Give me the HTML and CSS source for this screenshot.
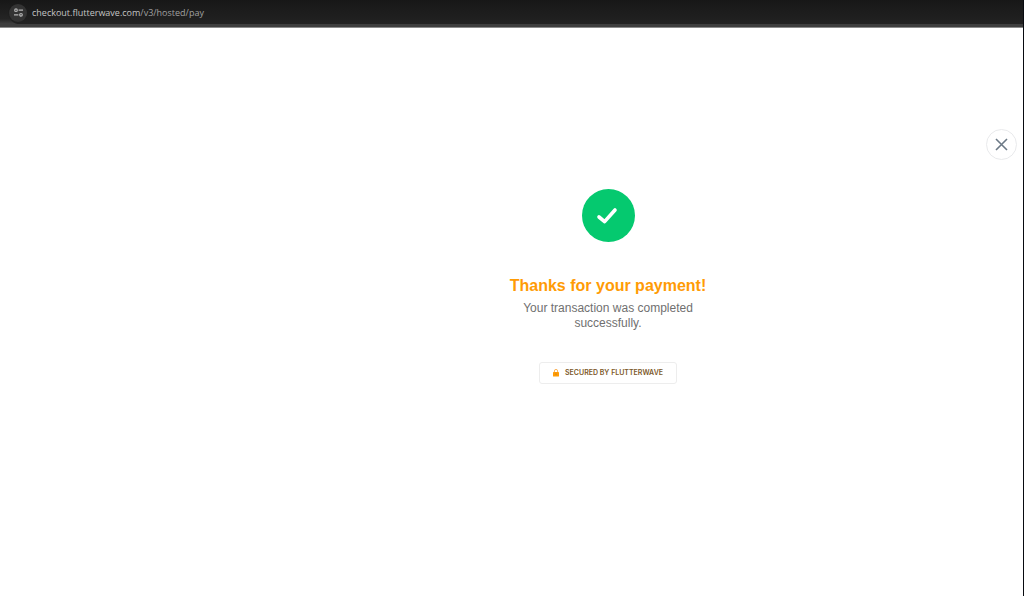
FILE: index.html
```html
<!DOCTYPE html>
<html lang="en">
<head>
<meta charset="utf-8">
<meta name="viewport" content="width=device-width, initial-scale=1">
<title>Payment complete</title>
<link rel="stylesheet" href="styles.css">
</head>
<body>
<header class="browser-bar">
  <div class="address">
    <button class="site-info" type="button" aria-label="View site information">
      <svg width="9" height="9" viewBox="0 0 9 9" fill="none" stroke="currentColor" stroke-width="1.2" aria-hidden="true">
        <circle cx="2" cy="2.2" r="1.3"/><path d="M4.6 2.2H9M0 6.8h4.4"/><circle cx="7" cy="6.8" r="1.3"/>
      </svg>
    </button>
    <span class="url"><span class="url-host">checkout.flutterwave.com</span>/v3/hosted/pay</span>
  </div>
</header>
<main class="page">
  <div class="toolbar">
    <button class="close" type="button" aria-label="Close">
      <svg width="13" height="13" viewBox="0 0 13 13" fill="none" stroke="currentColor" stroke-width="1.6" aria-hidden="true"><path d="M1 1l11 11M12 1L1 12"/></svg>
    </button>
  </div>
  <section class="result">
    <svg class="success" width="53" height="53" viewBox="0 0 53 53" aria-hidden="true">
      <circle cx="26.5" cy="26.5" r="26.5" fill="#05c96f"/>
      <path d="M17 28l5.6 4.6L33 21" fill="none" stroke="#fff" stroke-width="3.6" stroke-linecap="round" stroke-linejoin="round"/>
    </svg>
    <h1 class="title">Thanks for your payment!</h1>
    <p class="message">Your transaction was completed successfully.</p>
    <div class="secured">
      <svg width="6" height="8" viewBox="0 0 6 8" aria-hidden="true">
        <path d="M1.4 3.5V2a1.6 1.6 0 0 1 3.2 0v1.5" fill="none" stroke="#f8a94a" stroke-width=".9"/>
        <rect y="3" width="6" height="4.5" rx=".6" fill="#ff9b05"/><path d="M3 4.5v1.4" stroke="#b87824" stroke-width=".8"/>
      </svg>
      <span>SECURED BY FLUTTERWAVE</span>
    </div>
  </section>
</main>
</body>
</html>
```
FILE: styles.css
```css
* {
  box-sizing: border-box;
}

body {
  display: flex;
  flex-direction: column;
  min-height: 100vh;
  margin: 0;
  border-right: 1px solid #080a0f;
  background: #fff;
  font-family: "Liberation Sans", Arial, sans-serif;
}

button {
  display: grid;
  place-items: center;
  padding: 0;
  border-radius: 50%;
  cursor: pointer;
}

.browser-bar {
  height: 28px;
  padding: 1px 0 3px 8px;
  border-bottom: 1px solid #8a8a8a;
  background: linear-gradient(#171717, #242424 70%, #3e3e3e 88%);
}

.address {
  display: flex;
  align-items: center;
  gap: 5px;
  height: 23px;
  padding-left: 1px;
  border-radius: 12px 0 0 12px;
  background: linear-gradient(#181818, #222);
}

.site-info {
  width: 18px;
  height: 18px;
  border: 0;
  background: #333;
  color: #b5b5b5;
}

.url {
  color: #a0a0a0;
  font: 9px/16px "Open Sans", "Noto Sans", sans-serif;
}

.url-host {
  color: #c4c4c4;
}

.page {
  flex: 1;
  padding-top: 101px;
}

.toolbar {
  display: flex;
  justify-content: flex-end;
  padding-right: 6px;
}

.close {
  width: 31px;
  height: 31px;
  border: 1px solid #e9eaec;
  background: #fff;
  color: #6c7986;
}

.result {
  display: flex;
  flex-direction: column;
  align-items: center;
  margin-left: 193px;
  padding-top: 29px;
  text-align: center;
}

.title {
  margin: 34px 0 0;
  color: #ff9b05;
  font-size: 16px;
  font-weight: 700;
  line-height: 20px;
}

.message {
  max-width: 190px;
  margin: 5px 0 0;
  color: #707070;
  font-size: 12px;
  line-height: 15px;
}

.secured {
  display: flex;
  align-items: center;
  gap: 6px;
  height: 22px;
  margin-top: 31px;
  padding: 0 13px;
  border: 1px solid #ededed;
  border-radius: 3px;
  color: #7d592a;
  font-family: Inter, "Liberation Sans", sans-serif;
  font-size: 7px;
  font-weight: 600;
  line-height: 10px;
}
```
